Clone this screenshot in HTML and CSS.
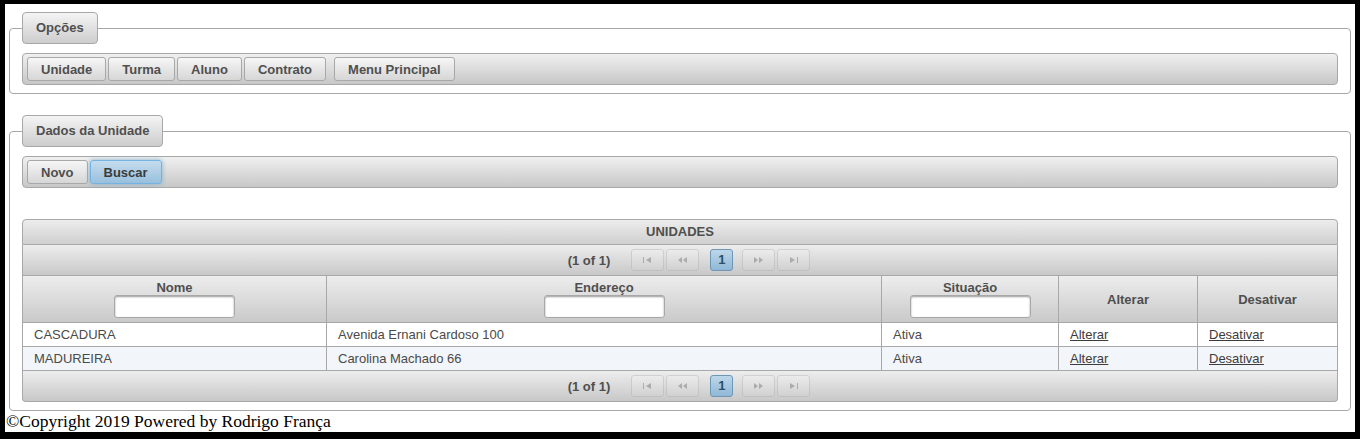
FILE: index.html
```html
<!DOCTYPE html>
<html lang="pt-BR">
<head>
<meta charset="utf-8">
<title>Unidade</title>
<link rel="stylesheet" href="styles.css">
</head>
<body>
<div class="page">
  <fieldset class="panel panel-opcoes">
    <legend class="panel-legend">Opções</legend>
    <div class="toolbar">
      <button class="btn">Unidade</button>
      <button class="btn">Turma</button>
      <button class="btn">Aluno</button>
      <button class="btn">Contrato</button>
      <span class="sep"></span>
      <button class="btn">Menu Principal</button>
    </div>
  </fieldset>

  <fieldset class="panel panel-dados">
    <legend class="panel-legend">Dados da Unidade</legend>
    <div class="toolbar">
      <button class="btn">Novo</button>
      <button class="btn btn-focus">Buscar</button>
    </div>

    <div class="datatable">
      <div class="dt-header">UNIDADES</div>
      <div class="paginator">
        <span class="pg-current">(1 of 1)</span>
        <span class="pg-btn pg-disabled"><svg width="9" height="6" viewBox="0 0 9 6"><rect x="0" y="0" width="1" height="6" fill="#555"/><path d="M8 0 L3 3 L8 6 Z" fill="#555"/></svg></span>
        <span class="pg-btn pg-disabled"><svg width="9" height="6" viewBox="0 0 9 6"><path d="M4 0 L0 3 L4 6 Z M9 0 L5 3 L9 6 Z" fill="#555"/></svg></span>
        <span class="pg-page">1</span>
        <span class="pg-btn pg-disabled"><svg width="9" height="6" viewBox="0 0 9 6"><path d="M0 0 L4 3 L0 6 Z M5 0 L9 3 L5 6 Z" fill="#555"/></svg></span>
        <span class="pg-btn pg-disabled"><svg width="9" height="6" viewBox="0 0 9 6"><path d="M1 0 L6 3 L1 6 Z" fill="#555"/><rect x="8" y="0" width="1" height="6" fill="#555"/></svg></span>
      </div>
      <table class="dt-table">
        <colgroup>
          <col class="c-nome"><col class="c-end"><col class="c-sit"><col class="c-alt"><col class="c-des">
        </colgroup>
        <thead>
          <tr>
            <th><span class="th-title">Nome</span><input class="filter" type="text"></th>
            <th><span class="th-title">Endereço</span><input class="filter" type="text"></th>
            <th><span class="th-title">Situação</span><input class="filter" type="text"></th>
            <th>Alterar</th>
            <th>Desativar</th>
          </tr>
        </thead>
        <tbody>
          <tr class="row-even">
            <td>CASCADURA</td>
            <td>Avenida Ernani Cardoso 100</td>
            <td>Ativa</td>
            <td><a href="#">Alterar</a></td>
            <td><a href="#">Desativar</a></td>
          </tr>
          <tr class="row-odd">
            <td>MADUREIRA</td>
            <td>Carolina Machado 66</td>
            <td>Ativa</td>
            <td><a href="#">Alterar</a></td>
            <td><a href="#">Desativar</a></td>
          </tr>
        </tbody>
      </table>
      <div class="paginator paginator-bottom">
        <span class="pg-current">(1 of 1)</span>
        <span class="pg-btn pg-disabled"><svg width="9" height="6" viewBox="0 0 9 6"><rect x="0" y="0" width="1" height="6" fill="#555"/><path d="M8 0 L3 3 L8 6 Z" fill="#555"/></svg></span>
        <span class="pg-btn pg-disabled"><svg width="9" height="6" viewBox="0 0 9 6"><path d="M4 0 L0 3 L4 6 Z M9 0 L5 3 L9 6 Z" fill="#555"/></svg></span>
        <span class="pg-page">1</span>
        <span class="pg-btn pg-disabled"><svg width="9" height="6" viewBox="0 0 9 6"><path d="M0 0 L4 3 L0 6 Z M5 0 L9 3 L5 6 Z" fill="#555"/></svg></span>
        <span class="pg-btn pg-disabled"><svg width="9" height="6" viewBox="0 0 9 6"><path d="M1 0 L6 3 L1 6 Z" fill="#555"/><rect x="8" y="0" width="1" height="6" fill="#555"/></svg></span>
      </div>
    </div>
  </fieldset>
  <div class="footer">©Copyright 2019 Powered by Rodrigo França</div>
</div>
</body>
</html>
```

FILE: styles.css
```css
html {
  background: #000;
  height: 100%;
}
body {
  margin: 0;
  padding: 4px 5px 7px 5px;
  height: 100%;
  box-sizing: border-box;
}
.page {
  background: #fff;
  height: 100%;
  padding-top: 8px;
  box-sizing: border-box;
  font-family: "Liberation Serif", serif;
}
.panel {
  margin: 0 4px;
  padding: 9px 12px 8px 12px;
  border: 1px solid #a8a8a8;
  border-radius: 4px;
  font-family: "Liberation Sans", Arial, sans-serif;
  font-size: 13px;
  color: #4f4f4f;
  min-width: 0;
}
.panel-dados {
  margin-top: 21px;
}
.panel-legend {
  padding: 7px 13px;
  line-height: 16px;
  font-weight: bold;
  border: 1px solid #a8a8a8;
  border-radius: 4px;
  background: linear-gradient(#f4f4f4, #cdcdcd);
  color: #4f4f4f;
}
.toolbar {
  display: flex;
  align-items: center;
  gap: 2px;
  height: 32px;
  box-sizing: border-box;
  padding: 0 4px;
  border: 1px solid #a8a8a8;
  border-radius: 4px;
  background: linear-gradient(#f0f0f0, #c7c7c7);
}
.sep {
  width: 4px;
}
.btn {
  height: 24px;
  padding: 0 13px;
  font-family: "Liberation Sans", Arial, sans-serif;
  font-size: 13px;
  font-weight: bold;
  color: #4f4f4f;
  border: 1px solid #a8a8a8;
  border-radius: 3px;
  background: linear-gradient(#f6f6f6, #d6d6d6);
  cursor: pointer;
}
.btn-focus {
  border-color: #74b2e2;
  background: linear-gradient(#c5dcee, #98c0dd);
  color: #3b3b3b;
  box-shadow: 0 0 5px #85b2cb;
}
.datatable {
  margin-top: 31px;
}
.dt-header {
  height: 26px;
  line-height: 24px;
  box-sizing: border-box;
  text-align: center;
  font-weight: bold;
  border: 1px solid #a8a8a8;
  border-radius: 4px 4px 0 0;
  background: linear-gradient(#ededed, #cfcfcf);
}
.paginator {
  display: flex;
  align-items: center;
  justify-content: center;
  height: 31px;
  box-sizing: border-box;
  padding-left: 20px;
  border: 1px solid #a8a8a8;
  border-top: none;
  background: linear-gradient(#ededed, #c8c8c8);
}
.paginator-bottom {
  border-radius: 0 0 4px 4px;
}
.pg-current {
  font-weight: bold;
  margin-right: 21px;
}
.pg-btn {
  display: flex;
  align-items: center;
  justify-content: center;
  width: 33px;
  height: 22px;
  box-sizing: border-box;
  margin-right: 2px;
  border: 1px solid #a8a8a8;
  border-radius: 3px;
  background: linear-gradient(#f6f6f6, #d6d6d6);
}
.pg-disabled {
  opacity: 0.35;
}
.pg-page {
  width: 23px;
  height: 22px;
  box-sizing: border-box;
  margin: 0 9px 0 9px;
  line-height: 20px;
  text-align: center;
  font-weight: bold;
  color: #2e4e69;
  border: 1px solid #6d97b5;
  border-radius: 3px;
  background: linear-gradient(#bdd7ea, #90b8d6);
}
.dt-table {
  width: 100%;
  border-collapse: collapse;
  table-layout: fixed;
}
.c-nome { width: 304px; }
.c-end { width: 555px; }
.c-sit { width: 177px; }
.c-alt { width: 139px; }
.dt-table th {
  padding: 4px 4px;
  line-height: 15px;
  height: 38px;
  font-weight: bold;
  text-align: center;
  vertical-align: middle;
  border: 1px solid #a8a8a8;
  border-top: none;
  background: linear-gradient(#ededed, #c9c9c9);
}
.th-title {
  display: block;
}
.filter {
  display: block;
  margin: 0 auto;
  width: 121px;
  height: 23px;
  box-sizing: border-box;
  border: 1px solid #a8a8a8;
  border-radius: 3px;
  background: #fff;
  box-shadow: inset 0 1px 2px #9a9a9a;
}
.dt-table td {
  padding: 4px 11px;
  line-height: 15px;
  border: 1px solid #a8a8a8;
  color: #4a4a4a;
  white-space: nowrap;
}
.row-even { background: #fff; }
.row-odd { background: #f2f5f9; }
.dt-table a {
  color: #3c3c3c;
  text-decoration: underline;
}
.footer {
  font-family: "Liberation Serif", "Times New Roman", serif;
  font-size: 17.5px;
  color: #000;
  padding-left: 1px;
  line-height: 20px;
}
```
